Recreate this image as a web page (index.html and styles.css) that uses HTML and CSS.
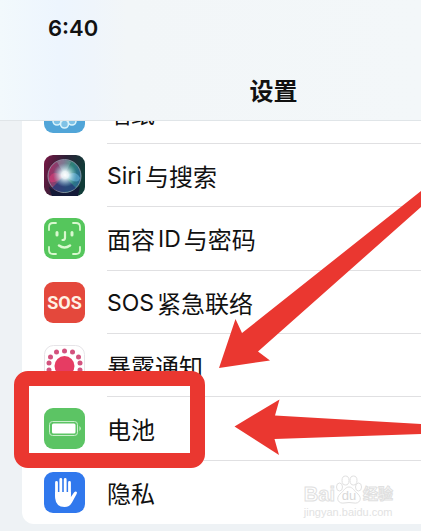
FILE: index.html
```html
<!DOCTYPE html>
<html lang="zh-CN">
<head>
    <meta charset="UTF-8">
    <meta name="viewport" content="width=device-width, initial-scale=1">
    <title>设置</title>
    <link rel="stylesheet" href="styles.css">
</head>
<body>
    <header class="header">
        <div class="time">6:40</div>
        <h1 class="title">设置</h1>
    </header>

    <main class="content">
        <nav class="settings">
            <a href="#" class="item item-cut">
                <svg class="icon" viewBox="0 0 41 41">
                    <rect width="41" height="41" rx="9" fill="#51a5d8"/>
                    <g fill="#7fc2e6" stroke="#d8f3fb" stroke-width="1.6">
                        <circle cx="20.5" cy="10" r="4.5"/>
                        <circle cx="28" cy="13" r="4.5"/>
                        <circle cx="31" cy="20" r="4.5"/>
                        <circle cx="28" cy="29" r="4"/>
                        <circle cx="13" cy="29" r="4"/>
                        <circle cx="20.5" cy="32" r="4"/>
                        <circle cx="10" cy="20" r="4.5"/>
                        <circle cx="13" cy="13" r="4.5"/>
                    </g>
                </svg>
                <span class="label">墙纸</span>
            </a>
            <a href="#" class="item">
                <svg class="icon" viewBox="0 0 41 41">
                    <defs>
                        <linearGradient id="siriBack" x1="0" y1="0" x2="1" y2="0.3">
                            <stop offset="0" stop-color="#7c1745"/>
                            <stop offset="0.5" stop-color="#2c2036"/>
                            <stop offset="1" stop-color="#103c38"/>
                        </linearGradient>
                        <linearGradient id="siriBall" x1="0" y1="0.4" x2="1" y2="0.6">
                            <stop offset="0" stop-color="#a62c62"/>
                            <stop offset="0.4" stop-color="#6b5078"/>
                            <stop offset="0.65" stop-color="#2f8377"/>
                            <stop offset="1" stop-color="#286696"/>
                        </linearGradient>
                        <radialGradient id="siriGlow">
                            <stop offset="0" stop-color="#fff"/>
                            <stop offset="0.3" stop-color="#f4fdff" stop-opacity="0.9"/>
                            <stop offset="1" stop-color="#9adbe8" stop-opacity="0"/>
                        </radialGradient>
                    </defs>
                    <rect width="41" height="41" rx="9" fill="url(#siriBack)"/>
                    <path d="M5 32Q20 44 36 31L34 41H8Z" fill="#141a38"/>
                    <circle cx="20.5" cy="21" r="16.5" fill="url(#siriBall)" stroke="#98a3b4" stroke-width="0.8"/>
                    <path d="M20 21L8 33Q20 41 32 33Z" fill="#263a78" opacity="0.8"/>
                    <path d="M20 21Q8 14 5 24Q7 32 20 21Z" fill="#cf3d76" opacity="0.7"/>
                    <path d="M21 21Q32 14 36 23Q34 31 21 21Z" fill="#59a4c9" opacity="0.8"/>
                    <path d="M20.5 20L13 7Q20 3 27 7Z" fill="#a9d8cd" opacity="0.3"/>
                    <circle cx="21" cy="20" r="12" fill="url(#siriGlow)"/>
                </svg>
                <span class="label"><span class="latin">Siri</span>与搜索</span>
            </a>
            <a href="#" class="item">
                <svg class="icon" viewBox="0 0 41 41">
                    <rect width="41" height="41" rx="9" fill="#55c65c"/>
                    <g fill="none" stroke="#d9f8cf" stroke-linecap="round">
                        <path d="M5 12V9Q5 5 9 5H12M29 5H32Q36 5 36 9V12M36 29V32Q36 36 32 36H29M12 36H9Q5 36 5 32V29" stroke-width="1.8"/>
                        <path d="M13 14.5V17M28 14.5V17" stroke-width="3"/>
                        <path d="M21 14V20Q21 22 18.5 22" stroke-width="2.2"/>
                        <path d="M15 27.5Q20.5 31.5 26 27.5" stroke-width="2.6"/>
                    </g>
                </svg>
                <span class="label">面容<span class="latin">ID</span>与密码</span>
            </a>
            <a href="#" class="item">
                <span class="icon icon-sos">SOS</span>
                <span class="label"><span class="latin">SOS</span>紧急联络</span>
            </a>
            <a href="#" class="item">
                <svg class="icon" viewBox="0 0 41 41">
                    <rect x="0.5" y="0.5" width="40" height="40" rx="9" fill="#fff" stroke="#e6e4e8"/>
                    <circle cx="20.5" cy="21" r="10" fill="#e63c63"/>
                    <g fill="#d3527e">
                        <circle cx="20.5" cy="6" r="2.5"/>
                        <circle cx="12.5" cy="7" r="2.5"/>
                        <circle cx="28.5" cy="7" r="2.5"/>
                        <circle cx="6.5" cy="12" r="2.5"/>
                        <circle cx="34.5" cy="12" r="2.5"/>
                        <circle cx="5" cy="18" r="2.5"/>
                        <circle cx="36" cy="18" r="2.5"/>
                        <circle cx="5" cy="25" r="2.5"/>
                        <circle cx="36" cy="25" r="2.5"/>
                        <circle cx="12.5" cy="35" r="2.5"/>
                        <circle cx="28.5" cy="35" r="2.5"/>
                    </g>
                </svg>
                <span class="label">暴露通知</span>
            </a>
            <a href="#" class="item item-marked">
                <svg class="icon" viewBox="0 0 41 41">
                    <rect width="41" height="41" rx="9" fill="#5cc464"/>
                    <rect x="5.5" y="13.5" width="28" height="14" rx="3" fill="none" stroke="#c9efcb"/>
                    <rect x="8" y="15.5" width="23.5" height="10" rx="1.5" fill="#fff"/>
                    <path d="M35.5 18Q38 20.5 35.5 23Z" fill="#d8f5d8"/>
                </svg>
                <span class="label">电池</span>
            </a>
            <a href="#" class="item">
                <svg class="icon" viewBox="0 0 41 41">
                    <rect width="41" height="41" rx="9" fill="#3078ed"/>
                    <path d="M12.5 24V10.5M16.8 22V7.5M21.2 22V7.5M25.5 23V10.5" fill="none" stroke="#fff" stroke-width="2.8" stroke-linecap="round"/>
                    <path d="M11.1 20H26.9V25L30 20.5Q31.5 19 32.8 20Q33.3 20.5 32.6 22L28 30.5Q25.5 35 20.5 35Q12 35 11.1 26Z" fill="#fff"/>
                </svg>
                <span class="label">隐私</span>
            </a>
        </nav>
    </main>

    <svg class="arrows" width="202" height="270" viewBox="0 0 202 270" fill="#ea3730">
        <path d="M0 178L16.5 129L23 143L202 1V17L39 161.5L51 170.5Z"/>
        <path d="M15.5 236.5L60.5 209.5L56 225.5L202 234V244L55.5 249L60 265Z"/>
    </svg>

    <div class="watermark">
        <div class="watermark-logo">
            <span>Bai</span>
            <svg class="paw" viewBox="0 0 26 30">
                <g fill="#fff" stroke="#e0e0e0">
                    <ellipse cx="9.5" cy="5.5" rx="3.5" ry="4.5"/>
                    <ellipse cx="17.5" cy="5.5" rx="3.5" ry="4.5"/>
                    <ellipse cx="3.5" cy="12" rx="3" ry="4"/>
                    <ellipse cx="22.5" cy="12" rx="3" ry="4"/>
                    <path d="M13 12C17 12 18 16 22 19C27 24 23 29 18 28Q13 27 8 28C3 29 -1 24 4 19C8 16 9 12 13 12Z"/>
                </g>
                <text class="paw-text" x="13" y="25" text-anchor="middle">du</text>
            </svg>
            <span class="watermark-cn">经验</span>
        </div>
        <div class="watermark-url">jingyan.baidu.com</div>
    </div>
</body>
</html>
```
FILE: styles.css
```css
*,
*::after {
    box-sizing: border-box;
}

body {
    position: relative;
    display: flex;
    flex-direction: column;
    min-height: 100vh;
    margin: 0;
    background-color: #eef2f5;
    color: #111;
    font-family: 'Noto Sans CJK SC', sans-serif;
    overflow-x: hidden;
}

.header {
    display: flex;
    flex-direction: column;
    justify-content: space-between;
    height: 121px;
    padding: 12px 0 12px 48px;
    border-bottom: 1px solid #e0e5e8;
    background: linear-gradient(90deg, #f2f9fc 0%, #edf5fe 14%, #eff5fb 22%, #f2f6f8 30%, #f3f7f9 100%);
}

.time {
    font-family: Inter, sans-serif;
    font-size: 22px;
    font-weight: 600;
    line-height: 32px;
}

.title {
    margin: 0;
    padding-left: 78px;
    font-size: 24px;
    font-weight: 700;
    line-height: 36px;
    text-align: center;
}

.content {
    display: flex;
    flex: 1;
    padding: 0 0 7px 22px;
}

.settings {
    display: flex;
    flex: 1;
    flex-direction: column;
    background-color: #fff;
    border-radius: 0 0 0 12px;
}

.item {
    position: relative;
    display: flex;
    flex: 1;
    align-items: center;
    gap: 22px;
    min-height: 60px;
    padding-left: 22px;
    color: #111;
    text-decoration: none;
}

/* scrolled halfway under the header */
.item-cut {
    flex: none;
    align-items: flex-end;
    height: 23px;
    min-height: 0;
    padding-bottom: 11px;
    overflow: hidden;
}

.icon {
    flex: none;
    width: 41px;
    height: 41px;
}

.icon-sos {
    border-radius: 9px;
    background-color: #e4483c;
    color: #fff0e4;
    font-family: Roboto, sans-serif;
    font-size: 18px;
    font-weight: 700;
    line-height: 41px;
    text-align: center;
}

.label {
    display: flex;
    flex: 1;
    align-items: center;
    align-self: stretch;
    gap: 3px;
    padding-top: 2px;
    border-bottom: 1px solid #e0e0e2;
    font-size: 24px;
    line-height: 36px;
}

.item-cut .label {
    align-items: flex-end;
    align-self: flex-end;
    margin-bottom: -11px;
    padding-bottom: 12px;
}

.item:last-child .label {
    border-bottom: none;
}

.latin {
    font-family: Inter, sans-serif;
    font-size: 23px;
}

.item-marked::after {
    content: "";
    position: absolute;
    top: -26px;
    bottom: -7px;
    left: -8px;
    width: 191px;
    border: 15px solid #ea3730;
    border-radius: 14px;
    z-index: 1;
}

.arrows {
    position: absolute;
    top: 190px;
    right: 0;
}

.watermark {
    position: absolute;
    right: 28px;
    bottom: 12px;
    color: #fff;
    font-family: 'Liberation Sans', 'Noto Sans CJK SC', sans-serif;
    -webkit-text-stroke: 1px #e0e0e0;
}

.watermark-logo {
    display: flex;
    align-items: flex-end;
    gap: 1px;
    font-size: 20px;
    font-weight: 700;
    line-height: 22px;
}

.paw {
    width: 26px;
    height: 30px;
}

.paw-text {
    fill: #d8d8d8;
    font-size: 13px;
    font-weight: 400;
    -webkit-text-stroke: 0;
}

.watermark-cn {
    font-size: 15px;
}

.watermark-url {
    color: #e2e2e2;
    font-size: 11px;
    line-height: 14px;
    -webkit-text-stroke: 0;
}
```
